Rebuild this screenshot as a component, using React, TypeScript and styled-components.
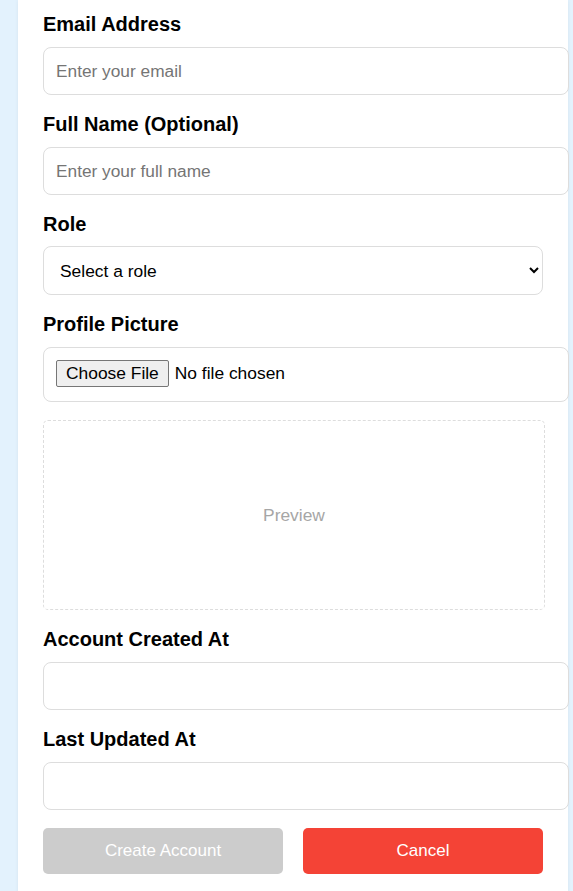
import React from "react";
import styled, { createGlobalStyle } from "styled-components";

const GlobalStyle = createGlobalStyle`
  html, body {
    margin: 0;
    padding: 0;
    background: #e3f2fd;
    font-family: "Liberation Sans", Arial, sans-serif;
  }
`;

const Card = styled.div`
  margin-left: 18px;
  width: 500px;
  padding: 13px 25px 20px 25px;
  background: #ffffff;
  box-shadow: 0 0 4px rgba(0, 0, 0, 0.06);
  min-height: 900px;
`;

const Group = styled.div`
  margin-bottom: 18px;
`;

const Label = styled.label<{ $tight?: boolean }>`
  display: block;
  font-size: 20px;
  line-height: 23px;
  font-weight: bold;
  color: #000;
  margin-bottom: ${(p) => (p.$tight ? "10px" : "11px")};
`;

const TextInput = styled.input`
  display: block;
  width: 100%;
  box-sizing: content-box;
  padding: 13px 12px;
  height: 20px;
  border: 1px solid #ddd;
  border-radius: 8px;
  font-family: "Liberation Sans", Arial, sans-serif;
  font-size: 17.3px;
  color: #000;
  background: #fff;
  outline: none;
  &::placeholder {
    color: #757575;
  }
`;

const Select = styled.select`
  display: block;
  width: 100%;
  box-sizing: border-box;
  height: 49px;
  padding: 0 12px;
  border: 1px solid #ddd;
  border-radius: 8px;
  font-family: "Liberation Sans", Arial, sans-serif;
  font-size: 17.4px;
  color: #000;
  background: #fff;
`;

const FileInput = styled.input`
  display: block;
  width: 100%;
  box-sizing: content-box;
  padding: 12px;
  height: 29px;
  border: 1px solid #ddd;
  border-radius: 8px;
  font-family: "Liberation Sans", Arial, sans-serif;
  font-size: 17.4px;
  color: #000;
  background: #fff;
  &::file-selector-button {
    font-family: "Liberation Sans", Arial, sans-serif;
    font-size: 17.4px;
    height: 27px;
    padding: 0 9px;
    margin-right: 6px;
    border: 1px solid #767676;
    border-radius: 2px;
    background: #efefef;
    color: #000;
  }
`;

const Preview = styled.div`
  box-sizing: content-box;
  width: 100%;
  height: 188px;
  border: 1px dashed #ddd;
  border-radius: 5px;
  display: flex;
  align-items: center;
  justify-content: center;
  font-size: 17.4px;
  color: #a6a6a6;
  margin-bottom: 18px;
`;

const Actions = styled.div`
  display: flex;
  gap: 20px;
`;

const Button = styled.button<{ $variant: "primary" | "danger" }>`
  flex: 1;
  height: 46px;
  border: none;
  border-radius: 5px;
  font-family: "Liberation Sans", Arial, sans-serif;
  font-size: 17px;
  color: #fff;
  background: ${(p) => (p.$variant === "danger" ? "#f44336" : "#cccccc")};
  cursor: ${(p) => (p.$variant === "danger" ? "pointer" : "not-allowed")};
`;

export default function App() {
  return (
    <>
      <GlobalStyle />
      <Card>
        <Group>
          <Label>Email Address</Label>
          <TextInput type="email" placeholder="Enter your email" />
        </Group>
        <Group>
          <Label>Full Name (Optional)</Label>
          <TextInput type="text" placeholder="Enter your full name" />
        </Group>
        <Group>
          <Label $tight>Role</Label>
          <Select defaultValue="">
            <option value="">Select a role</option>
            <option value="admin">Admin</option>
            <option value="user">User</option>
          </Select>
        </Group>
        <Group>
          <Label>Profile Picture</Label>
          <FileInput type="file" />
        </Group>
        <Preview>Preview</Preview>
        <Group>
          <Label>Account Created At</Label>
          <TextInput type="text" readOnly />
        </Group>
        <Group>
          <Label>Last Updated At</Label>
          <TextInput type="text" readOnly />
        </Group>
        <Actions>
          <Button $variant="primary" disabled>
            Create Account
          </Button>
          <Button $variant="danger">Cancel</Button>
        </Actions>
      </Card>
    </>
  );
}
